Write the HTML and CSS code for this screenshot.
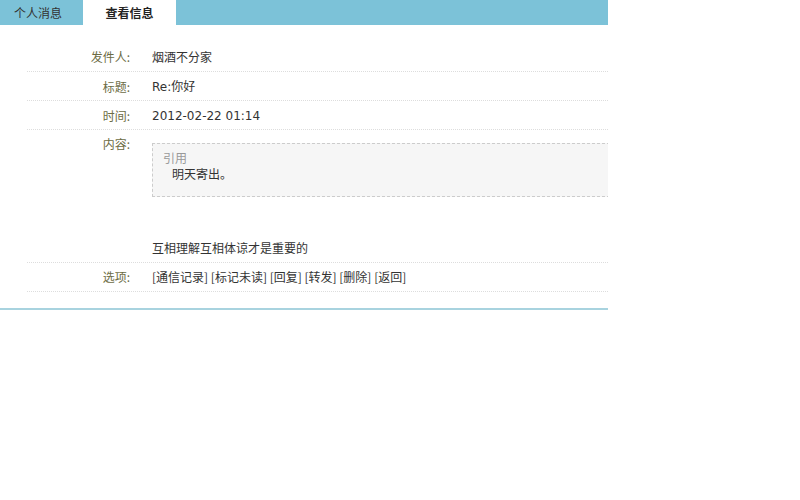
FILE: index.html
```html
<!DOCTYPE html>
<html lang="zh-CN">
<head>
  <meta charset="UTF-8">
  <title>查看信息</title>
  <link rel="stylesheet" href="styles.css">
</head>
<body>
  <div class="main">
    <ul class="tabs">
      <li><a href="#">个人消息</a></li>
      <li class="current"><a href="#">查看信息</a></li>
    </ul>

    <div class="msg">
      <div class="row">
        <div class="label">发件人:</div>
        <div class="value">烟酒不分家</div>
      </div>
      <div class="row">
        <div class="label">标题:</div>
        <div class="value latin">Re:你好</div>
      </div>
      <div class="row">
        <div class="label">时间:</div>
        <div class="value latin">2012-02-22 01:14</div>
      </div>
      <div class="row">
        <div class="label">内容:</div>
        <div class="value">
          <div class="quote">
            <div class="quote-title">引用</div>
            <div class="quote-body">明天寄出。</div>
          </div>
          <p class="body">互相理解互相体谅才是重要的</p>
        </div>
      </div>
      <div class="row">
        <div class="label">选项:</div>
        <div class="value actions">
          <a href="#">[通信记录]</a>
          <a href="#">[标记未读]</a>
          <a href="#">[回复]</a>
          <a href="#">[转发]</a>
          <a href="#">[删除]</a>
          <a href="#">[返回]</a>
        </div>
      </div>
    </div>
  </div>
</body>
</html>
```

FILE: styles.css
```css
body {
  margin: 0;
  background: #fff;
  font-family: "Noto Sans CJK SC", sans-serif;
  font-size: 12px;
  color: #333;
}
a {
  color: #333;
  text-decoration: none;
}
.main {
  width: 608px;
  overflow: hidden;
  padding-bottom: 16px;
  border-bottom: 2px solid #a8d3df;
}
.tabs {
  list-style: none;
  margin: 0;
  padding: 0;
  height: 25px;
  background: #7cc2d8;
  display: flex;
}
.tabs li a {
  display: block;
  width: 76px;
  padding-right: 7px;
  height: 25px;
  line-height: 25px;
  text-align: center;
  color: #333;
}
.tabs li.current a {
  width: 93px;
  padding-right: 0;
  background: #fff;
  font-weight: bold;
  color: #222;
}
.msg {
  margin: 18px 0 0 27px;
}
.row {
  display: flex;
  border-bottom: 1px dotted #ddd;
  padding: 5px 0;
  line-height: 18px;
}
.row:nth-child(2),
.row:nth-child(3) {
  padding: 6px 0 4px;
}
.label {
  width: 103px;
  text-align: right;
  color: #6c6c44;
}
.value {
  flex: 1;
  margin-left: 22px;
}
.value.latin {
  font-family: "DejaVu Sans", "Noto Sans CJK SC", sans-serif;
}
.quote {
  width: calc(100% + 20px);
  margin-top: 8px;
  padding: 6px 10px 14px;
  background: #f6f6f6;
  border: 1px dashed #ccc;
  line-height: 16px;
}
.quote-title {
  color: #999;
}
.quote-body {
  padding-left: 9px;
  color: #333;
}
.body {
  margin: 42px 0 0;
}
.actions a {
  margin-right: 0;
}
```
